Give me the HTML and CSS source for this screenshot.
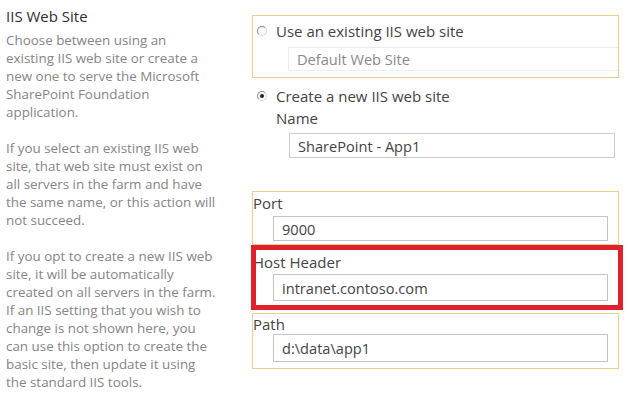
FILE: index.html
```html
<!DOCTYPE html>
<html lang="en">
  <head>
    <meta charset="UTF-8" />
    <title>IIS Web Site</title>
    <link rel="stylesheet" href="styles.css">
  </head>
  <body>
    <div class="page">
      <div class="info">
        <h2 class="info-title">IIS Web Site</h2>
        <p>
          Choose between using an<br />existing IIS web site or create a<br />new one to serve the Microsoft<br />SharePoint Foundation<br />application.
        </p>
        <p>
          If you select an existing IIS web<br />site, that web site must exist on<br />all servers in the farm and have<br />the same name, or this action will<br />not succeed.
        </p>
        <p>
          If you opt to create a new IIS web<br />site, it will be automatically<br />created on all servers in the farm.<br />If an IIS setting that you wish to<br />change is not shown here, you<br />can use this option to create the<br />basic site, then update it using<br />the standard IIS tools.
        </p>
      </div>

      <div class="form">
        <div class="group existing">
          <div class="radio-row">
            <span class="radio"></span>
            <span>Use an existing IIS web site</span>
          </div>
          <input class="text-input disabled" type="text" value="Default Web Site" disabled />
        </div>

        <div class="option-new">
          <div class="radio-row">
            <span class="radio checked"></span>
            <span>Create a new IIS web site</span>
          </div>
          <div class="sub-label">Name</div>
          <input class="text-input name-input" type="text" value="SharePoint - App1" />
        </div>

        <div class="group field port">
          <div class="field-label">Port</div>
          <input class="text-input" type="text" value="9000" />
        </div>

        <div class="group field host">
          <div class="field-label">Host Header</div>
          <input class="text-input" type="text" value="intranet.contoso.com" />
          <span class="highlight"></span>
        </div>

        <div class="group field path">
          <div class="field-label">Path</div>
          <input class="text-input" type="text" value="d:\data\app1" />
        </div>
      </div>
    </div>
  </body>
</html>
```

FILE: styles.css
```css
body {
  margin: 0;
  background: #fff;
  font-family: "Open Sans", "Noto Sans", sans-serif;
  color: #444;
}

.page {
  display: flex;
  padding-top: 6px;
}

/* left description column */
.info {
  width: 246px;
  margin-left: 6px;
  flex-shrink: 0;
}

.info-title {
  margin: 0 0 5px;
  font-size: 15px;
  font-weight: normal;
  line-height: 20px;
  color: #2f2f2f;
}

.info p {
  margin: 0 0 18px;
  font-size: 13.4px;
  line-height: 18px;
  color: #858585;
}

/* right form column */
.form {
  width: 372px;
  font-size: 15px;
  color: #444;
}

.group {
  border: 1px solid #e6d18e;
  box-sizing: border-box;
  width: 367px;
}

.existing {
  margin-top: 9px;
  padding: 5px 0 6px 4px;
}

.radio-row {
  display: flex;
  align-items: center;
  gap: 9px;
  line-height: 20px;
}

.radio {
  width: 10px;
  height: 10px;
  border-radius: 50%;
  border: 1px solid #8a8a8a;
  border-right-color: #d8d8d8;
  border-bottom-color: #d8d8d8;
  box-sizing: border-box;
  background: #fafafa;
  position: relative;
}

.radio.checked::after {
  content: "";
  position: absolute;
  left: 2px;
  top: 2px;
  width: 4px;
  height: 4px;
  border-radius: 50%;
  background: #222;
}

.text-input {
  display: block;
  box-sizing: border-box;
  height: 25px;
  padding: 0 8px;
  border: 1px solid #c4c4c8;
  background: #fff;
  font-family: "Open Sans", "Noto Sans", sans-serif;
  font-size: 14.6px;
  color: #444;
  outline: none;
}

.existing .text-input {
  margin: 6px 0 0 31px;
  width: 330px;
  height: 24px;
}

.text-input.disabled {
  border-color: #ececec;
  border-right: none;
  color: #8a8a8a;
}

.option-new {
  margin-top: 8px;
  padding-left: 5px;
}

.sub-label {
  margin: 2px 0 0 19px;
  line-height: 20px;
}

.name-input {
  margin: 5px 0 0 32px;
  width: 326px;
  border-color: #cfcfcf;
}

/* Port / Host Header / Path boxes */
.field .text-input {
  margin-left: 20px;
  width: 335px;
}

.field-label {
  line-height: 20px;
}

.port {
  margin-top: 33px;
  padding: 1px 0 3px;
}

.port .text-input {
  margin-top: 3px;
}

.host {
  position: relative;
  margin-top: 3px;
  padding: 3px 0 5px;
}

.host .text-input {
  margin-top: 2px;
  height: 27px;
}

.path {
  margin-top: 6px;
  padding: 0 0 6px;
}

.path .field-label {
  line-height: 18px;
  margin-top: 1px;
}

.path .text-input {
  margin-top: 1px;
  height: 28px;
}

/* red annotation frame over the host header box */
.highlight {
  position: absolute;
  left: -2px;
  right: -5px;
  top: -4px;
  bottom: -4px;
  border: 5px solid #e0202a;
  pointer-events: none;
}
```
